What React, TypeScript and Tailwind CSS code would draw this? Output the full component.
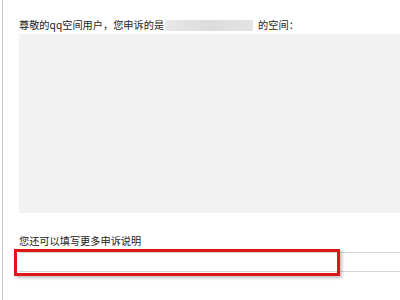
export default function App() {
  return (
    <div className="h-[300px] w-[400px] overflow-hidden bg-white pl-[2px] font-['Noto_Sans_CJK_SC','Noto_Sans',sans-serif] text-[#222]">
      <div className="h-full border-l border-[#c6c6c6] pl-[16px] pt-[19px]">
        {/* title line with blurred name */}
        <div className="flex h-[12px] items-center whitespace-nowrap text-[10.2px] leading-none">
          <span>尊敬的qq空间用户，您申诉的是</span>
          <span className="ml-[1px] h-[11px] w-[88px] bg-gradient-to-r from-[#e8e8e8] via-[#dcdcdc] to-[#e4e4e4]" />
          <span className="ml-[5px]">的空间：</span>
        </div>

        {/* appeal content area */}
        <div className="mt-[3px] h-[179px] bg-[#f2f2f2]" />

        <div className="mt-[22px] flex h-[12px] items-center text-[10.2px] leading-none">
          您还可以填写更多申诉说明
        </div>

        <div className="relative mt-[5px]">
          <div className="h-[20px] border-y border-[#d6d6d6]" />
          <div className="absolute left-[-5px] top-[-3px] h-[27px] w-[326px] border-[3px] border-[#e01616] shadow-[2px_2px_3px_rgba(0,0,0,0.25)]" />
        </div>
      </div>
    </div>
  );
}
